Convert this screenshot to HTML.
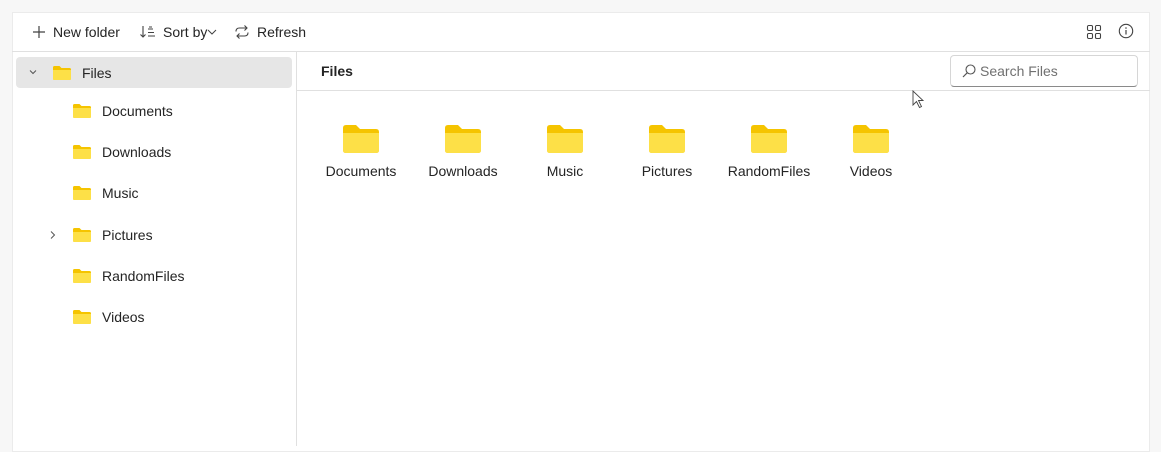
<!DOCTYPE html>
<html><head><style>
*{box-sizing:border-box;margin:0;padding:0}
body{width:1161px;height:446px;background:#f7f7f7;font-family:"Segoe UI","Liberation Sans",sans-serif;font-size:14px;color:#242424;overflow:hidden;position:relative}
.panel{position:absolute;left:12px;top:12px;width:1138px;height:440px;background:#fff;border:1px solid #ebebeb}
.abs{position:absolute}
.tb{display:flex;align-items:center;gap:6px;top:20px;height:24px}
.hline{position:absolute;height:1px;background:#e0e0e0}
.item{position:absolute;display:flex;align-items:center;height:20px}
.fi{width:20px;height:16px}
.big{position:absolute;text-align:center;width:90px}
</style></head><body>
<div class="panel"></div>
<div class="abs tb" style="left:31px">
<svg width="16" height="16" viewBox="0 0 16 16"><path d="M8 2v12M2 8h12" stroke="#424242" stroke-width="1.2"/></svg><span>New folder</span></div>
<div class="abs tb" style="left:139px">
<svg width="18" height="16" viewBox="0 0 18 16"><path d="M4 2v11M1.5 10.5 4 13l2.5-2.5M9 5h5M9 8.5h6M9 12h7M10 3h3" stroke="#424242" stroke-width="1.1" fill="none"/></svg><span>Sort by</span>
<svg width="10" height="8" viewBox="0 0 10 8" style="margin-left:-6px"><path d="M1 2l4 4 4-4" stroke="#424242" fill="none"/></svg></div>
<div class="abs tb" style="left:233px">
<svg width="18" height="16" viewBox="0 0 18 16"><path d="M3 7.5Q3 4 6.5 4H14M11.5 1.5 14 4l-2.5 2.5M15 8.5Q15 12 11.5 12H4M6.5 9.5 4 12l2.5 2.5" stroke="#424242" stroke-width="1.1" fill="none"/></svg><span>Refresh</span></div>
<svg class="abs" style="left:1086px;top:24px" width="16" height="16" viewBox="0 0 16 16"><g fill="none" stroke="#424242" stroke-width="1.1"><rect x="1.5" y="1.5" width="5" height="5" rx="1.2"/><rect x="9.5" y="1.5" width="5" height="5" rx="1.2"/><rect x="1.5" y="9.5" width="5" height="5" rx="1.2"/><rect x="9.5" y="9.5" width="5" height="5" rx="1.2"/></g></svg>
<svg class="abs" style="left:1118px;top:23px" width="16" height="16" viewBox="0 0 16 16"><circle cx="8" cy="8" r="6.7" fill="none" stroke="#424242" stroke-width="1.1"/><path d="M8 7v4.5" stroke="#424242" stroke-width="1.2"/><circle cx="8" cy="5" r=".8" fill="#424242"/></svg>
<div class="hline" style="left:12px;top:51px;width:1138px"></div>
<div class="abs" style="left:296px;top:52px;width:1px;height:394px;background:#e0e0e0"></div>
<div class="abs" style="left:16px;top:57px;width:276px;height:31px;background:#e6e6e6;border-radius:4px"></div>
<svg class="abs" style="left:28px;top:68px" width="10" height="8" viewBox="0 0 10 8"><path d="M2 2.5l3 3 3-3" stroke="#555" fill="none"/></svg>
<svg class="abs" style="left:49px;top:230px" width="8" height="10" viewBox="0 0 8 10"><path d="M2 1.5l3.5 3.5L2 8.5" stroke="#555" fill="none"/></svg>
<div id="tree"></div>
<div class="abs" style="left:321px;top:63px;font-weight:bold;font-size:14px">Files</div>
<div class="hline" style="left:297px;top:90px;width:853px"></div>
<div class="abs" style="left:950px;top:55px;width:188px;height:32px;border:1px solid #d6d6d6;border-bottom-color:#8a8a8a;border-radius:4px;display:flex;align-items:center;padding-left:10px;color:#707070">
<svg width="16" height="16" viewBox="0 0 16 16"><circle cx="9.5" cy="6.5" r="4.5" fill="none" stroke="#555" stroke-width="1.1"/><path d="M6.3 9.7 2 14" stroke="#555" stroke-width="1.2"/></svg><span style="margin-left:3px">Search Files</span></div>
<svg class="abs" style="left:912px;top:90px" width="14" height="20" viewBox="0 0 14 20"><path d="M1 1v14l3.5-3.5 3 6 2-1-3-6H11Z" fill="#fff" stroke="#444" stroke-width=".9"/></svg>
<div id="bf"></div>
<script>
var F='<path d="M1 2.5Q1 1 2.5 1h5l2 2H17.5Q19 3 19 4.5V13.5Q19 15 17.5 15H2.5Q1 15 1 13.5Z" fill="#f5c400"/><path d="M1 5h18v8.5Q19 15 17.5 15H2.5Q1 15 1 13.5Z" fill="#fde047"/>';
var n=["Documents","Downloads","Music","Pictures","RandomFiles","Videos"],h="";
n.forEach(function(t,i){var x=316+i*102;
h+='<div class="big" style="left:'+x+'px;top:122px"><svg width="40" height="34" viewBox="0 0 20 16">'+F+'</svg><div style="margin-top:4px">'+t+'</div></div>';});
document.getElementById("bf").innerHTML=h;
var tr='<div class="item" style="left:52px;top:63px"><svg class="fi" viewBox="0 0 20 16">'+F+'</svg><span style="margin-left:10px">Files</span></div>';
var ys=[101,142,183,225,266,307];
n.forEach(function(t,i){tr+='<div class="item" style="left:72px;top:'+ys[i]+'px"><svg class="fi" viewBox="0 0 20 16">'+F+'</svg><span style="margin-left:10px">'+t+'</span></div>';});
document.getElementById("tree").innerHTML=tr;
</script>
</body></html>
